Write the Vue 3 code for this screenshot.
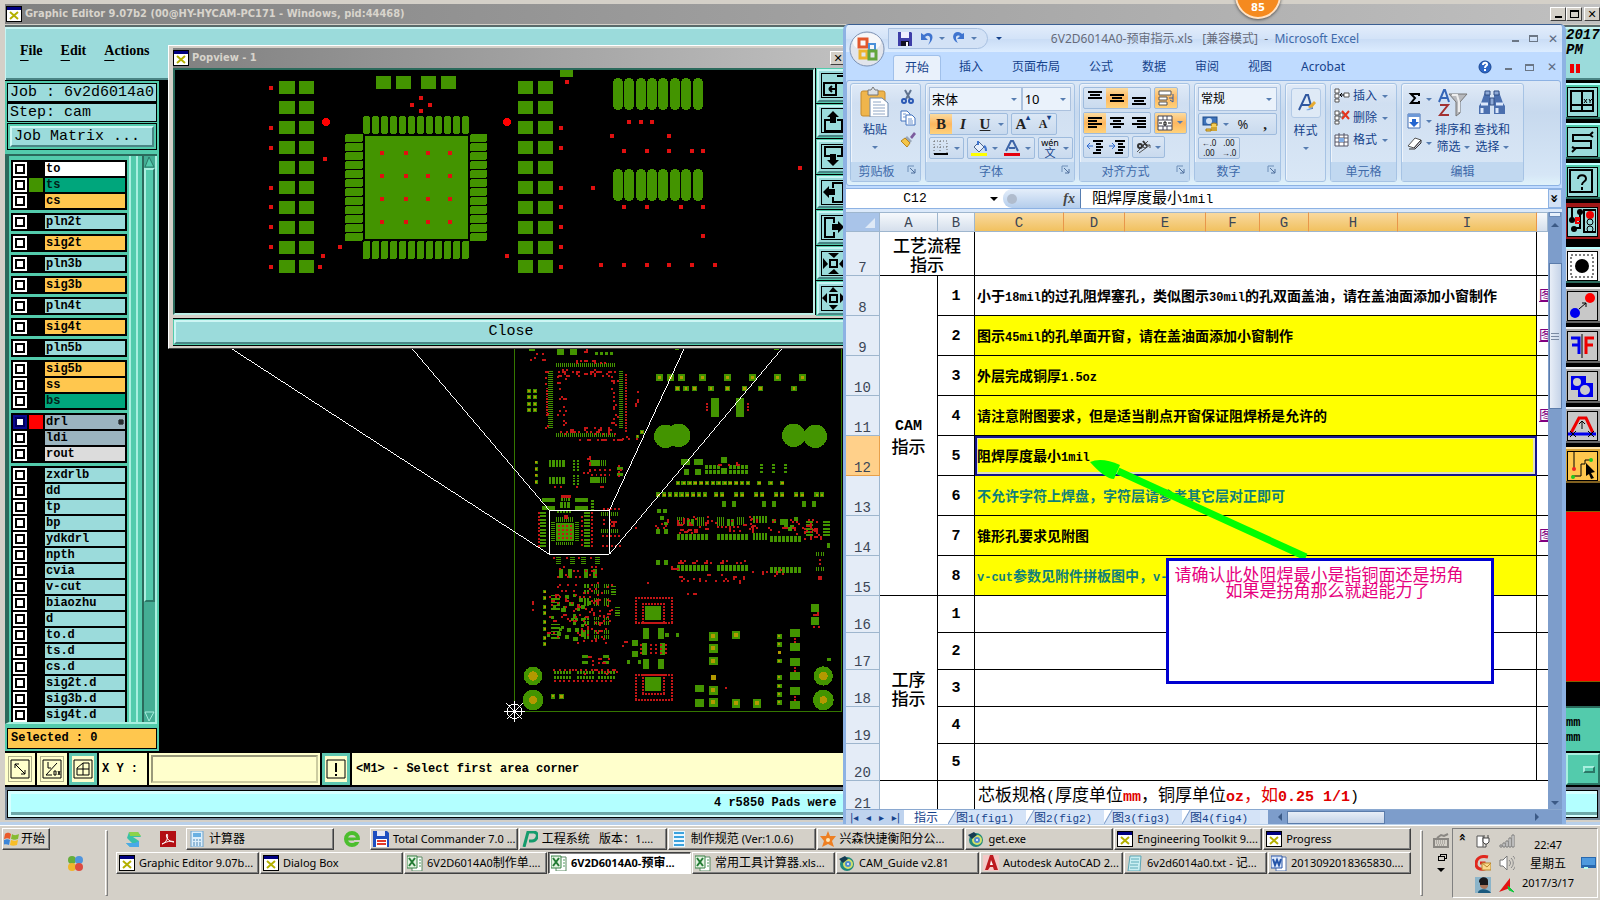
<script setup>
import { h } from 'vue'

const art = {
  xwin: '<rect width="16" height="16" fill="#fff" stroke="#000" stroke-width="2"/><rect x="1" y="1" width="14" height="3" fill="#000080"/><path d="M4 6l8 7M12 6l-8 7" stroke="#b4b000" stroke-width="2"/>',
  diag: '<path d="M1 1h18v18H1zM5 5l10 10M5 9V5h4M15 11v4h-4" fill="none" stroke="#000"/>',
  diagdx: '<path d="M1 1h18v18H1zM4 16L15 4M4 16h6M6 3v6h3M12 12h2v4h-2zM16 12l2 4M18 12l-2 4" fill="none" stroke="#000"/>',
  gridbox: '<path d="M1 1h18v18H1zM10 4h6v12H4V9zM4 10h12M10 4v12" fill="none" stroke="#000"/>',
  bang: '<path d="M1 1h18v18H1z" fill="none" stroke="#000"/><path d="M9 4h2v9H9zM9 15h2v2H9z"/>',
  zin: '<path d="M3 10h12v12H3zM16 3h7v7h-7M8 16h8M8 16l3-3M8 16l3 3" fill="none" stroke="#000" stroke-width="2"/>',
  up: '<path d="M9 12H4v11h17V12h-5" fill="none" stroke="#000" stroke-width="2"/><path d="M12 3l6 6h-3v6H9V9H6z"/>',
  down: '<path d="M9 12H4V3h17v9h-5" fill="none" stroke="#000" stroke-width="2"/><path d="M12 22l6-6h-3v-6H9v6H6z"/>',
  left: '<path d="M12 8V3h10v19H12v-5" fill="none" stroke="#000" stroke-width="2"/><path d="M2 12l6-6v3h6v6H8v3z"/>',
  right: '<path d="M13 8V3H4v19h9v-5" fill="none" stroke="#000" stroke-width="2"/><path d="M23 12l-6-6v3h-6v6h6v3z"/>',
  shrink: '<path d="M9 9h7v7H9z" fill="none" stroke="#000" stroke-width="2"/><path d="M7 2h11l-5 5zM7 23h11l-5-5zM2 7v11l5-5zM23 7v11l-5-5z"/>',
  grow: '<path d="M9 9h7v7H9z" fill="none" stroke="#000" stroke-width="2"/><path d="M12 1l5 5H8zM12 24l5-5H8zM1 12l5-5v10zM24 12l-5-5v10z"/>',
  save: '<path d="M1 1h13l1 1v13H1z" fill="#3e3ea8"/><path d="M4 1h8v6H4z" fill="#eef"/><path d="M4 10h8v5H4z" fill="#112"/><path d="M9 11h2v4H9z" fill="#fff"/>',
  undo: '<path d="M2 2v7h7L6 6c5-4 7 2 3 8 6-5 6-12 0-12-2 0-3 1-4 2z" fill="#3f74cf"/>',
  redo: '<path d="M13 2v6H6l3-3C4 3 4 8 7 12 0 9 1 1 7 1c2 0 3 1 4 2z" fill="#3f74cf"/>',
  paste: '<rect x="1" y="4" width="24" height="25" rx="2" fill="#efb54c" stroke="#c68b2c"/><path d="M8 3h3l2-3 2 3h3v5H8z" fill="#dde1e6" stroke="#777"/><path d="M10 11h12l6 5v14H10z" fill="#fff" stroke="#6d88ad"/><path d="M13 15h8M13 18h12M13 21h12M13 24h12M13 27h12" stroke="#8fa6c5"/>',
  cut: '<path d="M5 1l5 9M11 1l-5 9" stroke="#60738f" stroke-width="2"/><circle cx="4" cy="12" r="2" fill="none" stroke="#2b59b5" stroke-width="2"/><circle cx="11" cy="12" r="2" fill="none" stroke="#2b59b5" stroke-width="2"/>',
  copy: '<path d="M1 1h6l3 3v7H1z" fill="#fff" stroke="#4373bd"/><path d="M6 5h6l3 3v7H6z" fill="#fff" stroke="#4373bd"/><path d="M3 4h3M3 7h3M8 9h4M8 11h5M8 13h5" stroke="#6c94d0"/>',
  brush: '<path d="M10 6l4-5 2 2-4 5z" fill="#7c5c9e"/><path d="M7 5l5 5-2 2-5-5z" fill="#9aa7b8"/><path d="M5 7l5 5-3 4-6-6z" fill="#f5c547" stroke="#b58420"/>',
  border: '<path d="M1 1h13v13M1 1v13M7 1v13M1 7h13" fill="none" stroke="#666" stroke-dasharray="1 2"/><path d="M1 14h14" stroke="#000" stroke-width="2"/>',
  fill: '<path d="M3 7l5-5 5 5-5 5z" fill="#e6effb" stroke="#4a648c"/><path d="M7 5V1M13 6c2 1 2 4 2 5" stroke="#3f74cf" stroke-width="2" fill="none"/><path d="M0 13h16v3H0z" fill="#ff0"/>',
  fcolor: '<path d="M2 11L7 1h2l5 10M5 8h6" stroke="#3d65a8" stroke-width="2" fill="none"/><path d="M0 13h16v3H0z" fill="#e4000f"/>',
  top: '<path d="M1 2h14M3 5h10M1 8h14" stroke="#000" stroke-width="2"/>',
  mid: '<path d="M1 5h14M3 8h10M1 11h14" stroke="#000" stroke-width="2"/>',
  bot: '<path d="M1 8h14M3 11h10M1 14h14" stroke="#000" stroke-width="2"/>',
  al: '<path d="M1 3h14M1 6h9M1 9h14M1 12h9" stroke="#000" stroke-width="2"/>',
  ac: '<path d="M1 3h14M4 6h8M1 9h14M4 12h8" stroke="#000" stroke-width="2"/>',
  ar: '<path d="M1 3h14M6 6h9M1 9h14M6 12h9" stroke="#000" stroke-width="2"/>',
  out: '<path d="M6 2h10M9 5h5M9 8h7M9 11h5M6 14h8" stroke="#000" stroke-width="2"/><path d="M0 7h6M0 7l3-3M0 7l3 3" stroke="#2f6ad0" fill="none"/>',
  ind: '<path d="M6 2h10M9 5h5M9 8h7M9 11h5M6 14h8" stroke="#000" stroke-width="2"/><path d="M0 7h6M6 7L3 4M6 7l-3 3" stroke="#2f6ad0" fill="none"/>',
  wrap: '<path d="M1 1h12v4H1zM1 7h8v3H1zM1 12h8v3H1z" fill="#fff" stroke="#555"/><path d="M11 8h4V4M15 8v4l-3-2" fill="none" stroke="#3b5f99"/>',
  merge: '<path d="M1 1h14v14H1zM1 5h14M1 11h14M6 1v4M10 1v4M6 11v4M10 11v4" fill="#fff" stroke="#445"/><path d="M2 8h3M14 8h-3M7 7h2v3H7z" stroke="#000" fill="none"/>',
  orient: '<path d="M2 13L13 2M4 14L15 6M12 6h3v3" stroke="#555" fill="none"/><circle cx="5" cy="7" r="2" fill="none" stroke="#333" stroke-width="2"/><path d="M8 2l4 5" stroke="#333" stroke-width="2"/><circle cx="10" cy="7" r="2" fill="none" stroke="#333"/>',
  money: '<rect x="1" y="1" width="14" height="8" fill="#3e73ba" stroke="#1f4c8c"/><circle cx="7" cy="5" r="3" fill="#cfe0f4"/><ellipse cx="12" cy="9" rx="3" ry="2" fill="#f6cd57" stroke="#a97c12"/><path d="M9 10h6v5H9z" fill="#f6cd57"/><path d="M9 12h6M9 14h6M4 13h5v2H4z" stroke="#a97c12" fill="#f6cd57"/>',
  style: '<path d="M3 17L10 2h2l4 14M5 12h9" stroke="#2f579f" stroke-width="2" fill="none"/><path d="M12 14l6-6 2 2-5 6z" fill="#e8ab31"/><path d="M10 17c4 1 6-1 6-3" fill="#77a8e2"/>',
  ins: '<path d="M1 1h4v4H1zM1 6h4v4H1zM1 11h4v3H1zM10 5h5v4h-5z" fill="#fff" stroke="#555"/><path d="M6 7h4M6 7l2-2M6 7l2 2" stroke="#000" fill="none"/>',
  del: '<path d="M1 1h4v4H1zM1 6h4v4H1zM1 11h4v3H1zM6 3h3v4H6z" fill="#fff" stroke="#555"/><path d="M8 1l7 8M15 1L8 9" stroke="#e5331c" stroke-width="2"/>',
  fmt: '<path d="M1 3h13v11H1zM1 6h13M1 10h13M5 1v13M10 1v13" fill="#fff" stroke="#556"/><path d="M5 6h5v4H5z" fill="#7fabe4"/>',
  sum: '<path d="M12 5V3H4l4 4-4 5h8v-2" fill="none" stroke="#000" stroke-width="2"/>',
  filld: '<path d="M1 1h12v14H1z" fill="#fff" stroke="#456fb0"/><path d="M1 1h12v3H1z" fill="#6d98d7"/><path d="M5 6h4v3h3l-5 5-5-5h3z" fill="#2566cf"/>',
  erase: '<path d="M1 11l7-8 6 2-7 8z" fill="#fff" stroke="#555"/><path d="M7 13l7-8v3l-6 6H2" fill="#ccd" stroke="#333"/>',
  sort: '<path d="M11 5h18l-7 8v11l-4 3V13z" fill="#b7b9bd" stroke="#777"/><path d="M14 6h5l2 7v10" stroke="#eee" stroke-width="2" fill="none"/><path d="M1 13L6 1h1l4 12M3 9h6" stroke="#3566b8" stroke-width="2" fill="none"/><path d="M2 16h8L2 26h9" stroke="#a33131" stroke-width="2" fill="none"/>',
  find: '<path d="M3 14L7 3h5v22H1v-8zM16 3h5l4 11 2 3v8H16z" fill="#4b6fae"/><path d="M7 2h5v4H7zM16 2h5v4h-5zM12 9h4v7h-4z" fill="#8ea9d6" stroke="#314e84"/><path d="M3 15h7M18 15h7M4 19v5M19 19v5" stroke="#dce8fb" stroke-width="3"/>',
  launch: '<path d="M1 7V1h6" stroke="#6f8fb8" fill="none"/><path d="M3 3l5 5M8 4v4H4" stroke="#4f6f9c" fill="none"/>',
  s: '<path d="M4 1h9l3 5H8l6 4v6H5l-4-4h6L2 7z" fill="#38c1a8"/><path d="M4 1h9l3 4H5z" fill="#8bd34a"/><path d="M5 16l-4-4h9l4-2v6z" fill="#4aa9e8"/>',
  pdf: '<rect width="16" height="16" fill="#b30f14"/><path d="M2 13c4-1 7-7 5-10-2 2 1 8 7 8-3-2-8 0-12 2z" fill="none" stroke="#fff" stroke-width="1"/>',
  calc: '<rect x="2" y="0" width="12" height="16" fill="#dceefa" stroke="#6aa2cd"/><path d="M4 2h8v4H4z" fill="#69b0e2"/><path d="M4 9h8M4 12h8M4 14h8" stroke="#4b86b6" stroke-dasharray="2 1"/>',
  e: '<circle cx="8" cy="8" r="6" fill="none" stroke="#4cbe2e" stroke-width="4"/><path d="M4 8h8" stroke="#4cbe2e" stroke-width="3"/><path d="M10 10h6" stroke="#d4d0c8" stroke-width="2"/>',
  disk: '<path d="M0 0h14l2 2v14H0z" fill="#1d4ec1"/><path d="M4 0h8v5H4z" fill="#e4e7f5"/><path d="M3 8h11v8H3z" fill="#fff"/><path d="M4 10h9M4 13h9" stroke="#e13a2b" stroke-width="2"/>',
  p: '<path d="M2 16L6 1h6c6 1 3 9-2 9H7" fill="none" stroke="#159b6c" stroke-width="3"/>',
  doc: '<rect x="2" y="0" width="12" height="16" fill="#e9f7ff"/><path d="M3 2h10M3 6h10M3 10h10M3 14h10" stroke="#3ba2dd" stroke-width="2"/>',
  star: '<path d="M8 0l2 5 6 0-4 5 2 6-6-3-6 3 2-6-4-5h6z" fill="#ee7f22"/><circle cx="8" cy="9" r="2" fill="#ffe9b8"/>',
  gear: '<circle cx="8" cy="9" r="7" fill="#20887c"/><circle cx="9" cy="9" r="4" fill="#4f8cd0" stroke="#d2e06a" stroke-width="2"/><path d="M0 4l6-3 3 3-5 4z" fill="#153b52"/><circle cx="9" cy="9" r="1" fill="#fff"/>',
  xls: '<path d="M5 2h10v14H5z" fill="#fff" stroke="#5b8a62"/><path d="M0 1h10v12H0z" fill="#e3f3e1" stroke="#388246"/><path d="M2 3l6 8M8 3l-6 8" stroke="#237b34" stroke-width="2"/><path d="M12 5h2M12 8h2M12 11h2" stroke="#4f9a5f"/>',
  acad: '<rect width="16" height="16" fill="#f3c9c7"/><path d="M2 15L7 0h3l5 15h-4l-1-3H7l-2 3z" fill="#bd1a1f"/><path d="M8 5l2 5H7z" fill="#fff"/>',
  txt: '<path d="M3 1h11l-1 15H1z" fill="#c9eef2" stroke="#5ca6b4"/><path d="M4 4h8M4 7h8M3 10h8M3 13h8" stroke="#5caab8"/>',
  word: '<path d="M5 2h10v14H5z" fill="#fff" stroke="#5475ae"/><path d="M0 1h11v12H0z" fill="#dce8fb" stroke="#2b57a8"/><path d="M2 4l2 6 2-5 2 5 2-6" stroke="#2454a8" stroke-width="2" fill="none"/>',
  flag: '<path d="M1 3c3-2 4-1 6 0L6 8C4 7 3 7 0 8z" fill="#ea5a2a"/><path d="M8 3c3 2 4 1 7 0l-1 5c-3 1-4 1-7 0z" fill="#85bb31"/><path d="M0 9c3-1 4-1 6 0l-1 5c-2-1-4-1-6 0z" fill="#3d86d8"/><path d="M7 9c3 1 4 1 7 0l-1 5c-3 1-5 1-7 0z" fill="#f7bd26"/>',
  balls: '<circle cx="5" cy="5" r="4" fill="#65ae3c"/><circle cx="12" cy="5" r="4" fill="#4f94dd"/><circle cx="5" cy="12" r="4" fill="#f0b62c"/><circle cx="12" cy="12" r="4" fill="#dd4b41"/>',
  keyb: '<path d="M1 6h14v8H1zM4 5l4-3 3 1 4-2" fill="none" stroke="#8a8782" stroke-width="2"/><path d="M3 8h10M3 10h10M4 12h8" stroke="#8a8782" stroke-dasharray="1 1"/>',
  plug: '<path d="M2 3h6v11H2z" fill="#fff" stroke="#555"/><path d="M8 5h6v4l-2 2h-2l-2-2zM9 2v3M13 2v3M11 11v3H8" fill="#fff" stroke="#444"/>',
  bars: '<path d="M1 12h2v2H1zM4 10h2v4H4zM7 8h2v6H7zM10 5h2v9h-2zM13 2h2v12h-2z" fill="#fff" stroke="#777"/>',
  g: '<path d="M13 2C5 0 1 4 1 9c0 4 4 6 8 5V8H5" fill="none" stroke="#e0281e" stroke-width="3"/><path d="M7 8h9v7H7z" fill="#fbd98c" stroke="#b9872e"/><path d="M7 8l5 4 4-4" fill="none" stroke="#b9872e"/>',
  vol: '<path d="M1 5h3l4-4v14l-4-4H1z" fill="#fff" stroke="#777"/><path d="M10 5c2 2 2 4 0 6M12 3c3 3 3 7 0 10M14 1c4 4 4 10 0 14" fill="none" stroke="#888"/>',
  face: '<rect width="16" height="16" fill="#8bb4c9"/><path d="M3 16c0-5 10-5 13 0z" fill="#1b5a7e"/><path d="M5 4c0-4 8-4 8 0v5c-1 4-6 4-8 0z" fill="#a8745a"/><path d="M4 5c0-6 9-6 9-1v2H5zM5 6h8v2H5z" fill="#19191c"/>',
  tri: '<path d="M11 1v10L0 15z" fill="#e41414"/><path d="M9 9l6 6-5-2z" fill="#12c63c" stroke="#12c63c"/>',
  mon: '<path d="M0 2h15v11H0z" fill="#2868ae"/><path d="M1 3h13v7H1z" fill="#4f9ade"/><path d="M3 12h4v2H3z" fill="#bfe"/>',
  office: '<circle cx="18" cy="18" r="17" fill="#e2e5ec" stroke="#7b90b2"/><ellipse cx="18" cy="11" rx="14" ry="9" fill="#fff" opacity=".7"/><path d="M10 8h8v8h-8z" fill="none" stroke="#e2572c" stroke-width="3"/><path d="M20 13h6v6h-6z" fill="none" stroke="#4a90d9" stroke-width="2"/><path d="M11 20h7v7h-7z" fill="none" stroke="#eeb42c" stroke-width="3"/><path d="M20 20h7v8h-7z" fill="none" stroke="#62a53c" stroke-width="3"/>',
  help: '<circle cx="7" cy="7" r="6" fill="#2e67c6" stroke="#1b4894"/><path d="M5 5c0-3 5-3 4 0-1 1-2 1-2 3M7 9v2" stroke="#fff" stroke-width="2" fill="none"/>',
  t1: '<path d="M3 3h22v20H3zM14 3v20M3 17h22" fill="none" stroke="#000" stroke-width="2"/><path d="M16 11l3 4M19 11l-3 4M21 11l1 2 2-2M22 13v2" stroke="#000" fill="none"/>',
  t2: '<path d="M25 4l-3 3H5v6h18v7H8l-4 4M4 19l4 2M25 9l-3-2" fill="none" stroke="#000" stroke-width="2"/>',
  t3: '<path d="M2 2h22v22H2z" fill="none" stroke="#000" stroke-width="2"/><path d="M10 11c0-5 8-5 8 0 0 3-4 2-4 6M14 19v3" fill="none" stroke="#000" stroke-width="2"/>',
  t4: '<path d="M4 0v11M12 4v16H7M16 2h12v22H16z" fill="none" stroke="#000" stroke-width="2"/><circle cx="12" cy="4" r="3"/><circle cx="4" cy="12" r="3"/><circle cx="6" cy="21" r="3"/><circle cx="22" cy="7" r="4" fill="#e00"/><circle cx="22" cy="14" r="3" fill="none" stroke="#000"/><circle cx="22" cy="21" r="3" fill="none" stroke="#000"/><path d="M12 10H8v5h4M8 12h4" stroke="#e00" stroke-width="2" fill="none"/>',
  t5: '<path d="M3 3h22v22H3z" fill="none" stroke="#000" stroke-dasharray="2 2"/><circle cx="14" cy="14" r="7"/>',
  t6: '<circle cx="7" cy="21" r="5" fill="#00e"/><circle cx="22" cy="6" r="5" fill="#f00"/><path d="M11 17l7-6M14 11h4v4" stroke="#000" fill="none"/>',
  t7: '<path d="M14 2v24" stroke="#000"/><path d="M3 6h8v16M4 13h7" stroke="#00e" stroke-width="3" fill="none"/><path d="M26 6h-8v16M25 13h-7" stroke="#e00" stroke-width="3" fill="none"/>',
  t8: '<path d="M3 4h15v7h7v14H10v-7H3z" fill="#00e"/><circle cx="9" cy="10" r="4" fill="#ccc"/><circle cx="17" cy="18" r="5" fill="#ccc"/>',
  t9: '<path d="M3 21l8-15h7l7 15" stroke="#e00" stroke-width="3" fill="none"/><path d="M0 22h28" stroke="#00e" stroke-width="3"/><path d="M14 9v8M11 12l3-3 3 3M2 19l6 6M8 19l-6 6M20 19l6 6M26 19l-6 6" stroke="#000" fill="none"/>',
  t10: '<path d="M6 0v16M4 24h9l0-12h4V8h6" stroke="#000" fill="none"/><circle cx="6" cy="17" r="2" fill="#e22"/><circle cx="5" cy="25" r="2" fill="#2c2"/><circle cx="23" cy="8" r="2" fill="#2c2"/><path d="M18 11l9 9-4 1 3 5-3 1-2-5-3 2z"/>'
}
const Icon = (p) => h('svg', { width: p.w || 16, height: p.h || p.w || 16, viewBox: `0 0 ${p.w || 16} ${p.h || p.w || 16}`, 'aria-hidden': 'true', innerHTML: art[p.n] })
Icon.props = ['n', 'w', 'h']

const layers = [
  [['to', 'w'], ['ts', 'g', '#439400'], ['cs', 'o']],
  [['pln2t', 'b']], [['sig2t', 'o']], [['pln3b', 'b']], [['sig3b', 'o']],
  [['pln4t', 'b']], [['sig4t', 'o']], [['pln5b', 'b']],
  [['sig5b', 'o'], ['ss', 'o'], ['bs', 'g']],
  [['drl', 's', '#ff0000'], ['ldi', 's'], ['rout', 'l']],
  ['zxdrlb', 'dd', 'tp', 'bp', 'ydkdrl', 'npth', 'cvia', 'v-cut', 'biaozhu', 'd', 'to.d', 'ts.d', 'cs.d', 'sig2t.d', 'sig3b.d', 'sig4t.d'].map((n) => [n, 'b'])
]

const box = (x, y, w, hh) => `M${x} ${y}h${w}v${hh}h${-w}z`
const run = (x, y, n, dx, w, hh) => Array.from({ length: n }, (_, i) => box(x + i * dx, y, w, hh)).join('')
const stack = (x, y, n, dy, w, hh) => Array.from({ length: n }, (_, i) => box(x, y + i * dy, w, hh)).join('')
const dots = (pts, s) => pts.map(([x, y]) => box(x - s / 2, y - s / 2, s, s)).join('')
let seed = 7
const rnd = () => (seed = (seed * 16807) % 2147483647) / 2147483647
const scatter = (x, y, w, hh, n, a = 6, b = 6) =>
  Array.from({ length: n }, () => box(x + Math.round((rnd() * w) / 6) * 6, y + Math.round((rnd() * hh) / 6) * 6, a, b)).join('')
const ring = (x, y, w, hh, d = 9) => {
  let s = ''
  for (let i = 0; i <= w; i += d) s += box(x + i, y, 6, 6) + box(x + i, y + hh, 6, 6)
  for (let i = 0; i <= hh; i += d) s += box(x, y + i, 6, 6) + box(x + w, y + i, 6, 6)
  return s
}

const viaPts = [
  ...[779, 812, 844, 907, 983, 1057, 1132, 1207].map((x) => [x, 116, 20]),
  ...[833, 858, 883, 933, 983, 1033, 1082, 1182].map((x) => [x, 148, 16]),
  ...[156, 174, 195, 214].flatMap((y) => [[387, y, 12], [406, y, 12]]),
  ...[370, 390, 409, 429].map((y) => [409, y, 10]),
  ...[834, 851, 869, 886, 904, 921, 939, 956, 974, 991, 1009, 1026, 1044, 1078, 1112, 1147].map((x) => [x, 432, 13]),
  ...[775, 793, 810, 828, 845, 862, 880, 897, 915, 949, 967, 1009, 1027, 1069, 1087, 1129, 1147, 1189, 1207, 1250, 1266].map((x) => [x, 467, 13]),
  ...[758, 777, 804, 823, 850, 870, 897, 916].map((y) => [434, y, 11]),
  [459, 1072, 14], [484, 1072, 15],
  ...[892, 928, 966, 1054, 1090].map((y) => [940, y, 26]),
  [1008, 889, 24], [1008, 1093, 26], [1071, 1093, 26],
  ...[892, 916, 966, 1015, 1041, 1066, 1090].map((y) => [1138, y, 14]),
  [713, 292, 10], [726, 279, 12]
]
const green = [
  run(469, 72, 30, 6, 3, 12), run(469, 282, 30, 6, 3, 12), stack(444, 96, 29, 6, 15, 3), stack(657, 96, 29, 6, 12, 3),
  box(471, 30, 21, 18), box(510, 30, 21, 18), run(585, 39, 4, 15, 8, 9), box(387, 30, 18, 5), box(825, 30, 12, 4), box(1122, 30, 14, 4),
  box(933, 177, 24, 57), box(1008, 177, 24, 57),
  run(447, 362, 5, 10, 7, 22), run(447, 413, 5, 10, 7, 22), stack(520, 362, 4, 9, 5, 6), stack(531, 362, 4, 9, 5, 6), stack(520, 408, 4, 8, 5, 5), stack(531, 408, 4, 8, 5, 5),
  box(570, 362, 30, 19), box(570, 413, 30, 19), run(603, 362, 3, 6, 3, 19), run(603, 413, 3, 6, 3, 19), box(651, 384, 18, 8), box(651, 402, 18, 8),
  box(426, 477, 39, 12), box(426, 501, 39, 12), box(525, 477, 39, 12), box(525, 501, 39, 12), run(480, 488, 3, 11, 8, 20), run(484, 472, 4, 7, 4, 14), stack(573, 483, 4, 9, 9, 6),
  stack(420, 519, 11, 10, 8, 6), stack(430, 519, 11, 10, 8, 6), stack(552, 519, 11, 10, 8, 6), stack(562, 519, 11, 10, 8, 6),
  box(468, 552, 55, 54), run(468, 535, 9, 6, 4, 13), run(468, 609, 9, 6, 4, 8), stack(453, 549, 10, 6, 11, 3), stack(526, 549, 10, 6, 11, 3),
  run(603, 519, 9, 6, 3, 12), run(603, 570, 9, 6, 3, 12), run(472, 516, 5, 9, 6, 6),
  ...[468, 510, 543, 585].map((x) => stack(x, 654, 4, 6, 15, 4)),
  run(477, 690, 2, 28, 12, 27), run(551, 690, 2, 28, 12, 27),
  ...[735, 753, 777, 790, 833, 846, 874, 888].map((y) => run(552, y, 2, 9, 5, 11) + run(582, y, 3, 6, 3, 11) + run(612, y, 3, 6, 3, 11)),
  stack(453, 768, 5, 10, 28, 4), stack(453, 855, 5, 10, 28, 4),
  ...[[495, 768], [508, 790], [537, 777], [543, 798], [560, 786], [484, 806], [501, 866], [525, 868], [495, 888], [520, 893], [544, 880], [471, 880]].map(([x, y]) => box(x, y, 13, 12)),
  stack(633, 741, 4, 8, 14, 4), stack(645, 804, 4, 8, 14, 4), scatter(440, 760, 110, 140, 20, 9, 9),
  run(547, 948, 2, 9, 8, 8), run(547, 966, 2, 9, 8, 8), run(610, 948, 2, 9, 8, 8), run(610, 966, 2, 9, 8, 8),
  run(462, 996, 6, 9, 6, 8), run(462, 1011, 6, 9, 6, 9), run(531, 996, 6, 9, 6, 8), run(531, 1011, 6, 9, 6, 9), run(594, 996, 6, 9, 6, 8), run(594, 1011, 6, 9, 6, 9),
  box(735, 801, 48, 42), box(735, 1014, 48, 42),
  run(729, 867, 2, 45, 18, 33), box(727, 912, 14, 36), box(780, 912, 15, 36), run(729, 960, 2, 45, 18, 30), box(696, 903, 18, 18), box(696, 936, 18, 18),
  box(795, 882, 12, 11), box(828, 882, 9, 11), box(681, 963, 9, 11), box(714, 963, 9, 11),
  ...[870, 912, 957, 1000, 1044, 1086].map((y) => box(1170, y, 30, 23)), box(885, 1038, 27, 21), box(885, 1080, 27, 23), box(1281, 957, 12, 8),
  box(844, 360, 26, 17), box(882, 360, 27, 17), box(852, 391, 15, 17), box(885, 391, 18, 17), box(963, 355, 18, 16), box(963, 387, 18, 17),
  run(915, 378, 4, 12, 9, 12), run(915, 393, 4, 12, 9, 11), run(987, 378, 5, 12, 9, 12), run(987, 393, 5, 12, 9, 11),
  ...[1080, 1116, 1153].map((x) => stack(x, 375, 3, 10, 8, 6)),
  ...[966, 996, 1086, 1116, 1206, 1236].map((x) => box(x, 486, 12, 17)),
  run(831, 585, 8, 12, 9, 18), run(951, 585, 8, 12, 9, 18), run(1059, 582, 5, 9, 6, 20), run(1110, 591, 8, 12, 9, 18), run(1059, 531, 5, 9, 6, 21),
  run(831, 678, 8, 12, 9, 18), run(951, 678, 8, 12, 9, 18), run(1110, 685, 8, 12, 9, 18),
  run(831, 534, 4, 6, 4, 13), run(831, 549, 4, 6, 4, 10), run(861, 540, 2, 12, 8, 20), run(890, 534, 4, 6, 4, 26), run(951, 534, 4, 6, 4, 26), run(981, 540, 2, 12, 8, 20), run(1010, 534, 4, 6, 4, 24),
  scatter(1110, 534, 80, 30, 9, 11, 11), stack(1218, 546, 5, 10, 20, 6), stack(1269, 546, 5, 10, 20, 6),
  box(768, 570, 12, 16), box(793, 570, 10, 16), box(768, 663, 12, 16), box(793, 663, 10, 16), box(772, 511, 12, 10), box(790, 511, 10, 10), box(781, 532, 12, 10), box(793, 548, 12, 9),
  run(1248, 639, 4, 7, 3, 12), run(1248, 685, 4, 7, 3, 12), box(1281, 612, 9, 16), box(1233, 795, 24, 24), box(1233, 834, 24, 24),
  viaPts.map(([x, y, s]) => box(x - s / 2, y - s / 2, s, s)).join('')
].join('')
const gold = viaPts.map(([x, y, s]) => box(x - Math.round(s / 4), y - Math.round(s / 4), Math.round(s / 2), Math.round(s / 2))).join('') + box(932, 1008, 16, 15) + box(1133, 936, 10, 10)
const red = [
  scatter(474, 90, 168, 18, 36), scatter(474, 263, 168, 18, 32), scatter(470, 110, 26, 150, 18), scatter(632, 110, 16, 150, 18), stack(438, 146, 11, 8, 5, 5), stack(676, 105, 22, 8, 5, 5),
  scatter(480, 62, 140, 4, 10), scatter(500, 300, 170, 2, 14), scatter(435, 90, 6, 190, 8), scatter(700, 150, 12, 60, 5), scatter(390, 36, 60, 36, 6), scatter(540, 30, 20, 12, 4),
  stack(918, 191, 3, 10, 6, 6), stack(1041, 191, 3, 10, 6, 6),
  scatter(548, 346, 20, 60, 8), run(568, 390, 5, 15, 5, 5), run(574, 405, 5, 13, 5, 5), scatter(450, 440, 160, 2, 6), scatter(655, 378, 10, 50, 4),
  run(484, 468, 5, 6, 5, 8), stack(414, 519, 10, 11, 5, 6), stack(574, 519, 10, 11, 5, 6), stack(543, 530, 7, 14, 5, 6), box(493, 529, 12, 10),
  ...[558, 570, 582, 594].map((y) => run(474, y, 4, 12, 7, 7)),
  run(609, 507, 5, 11, 6, 5), run(606, 618, 5, 13, 6, 5), scatter(603, 540, 50, 18, 12), run(606, 588, 5, 12, 5, 5),
  run(460, 654, 4, 37, 6, 6), scatter(470, 682, 130, 34, 18), scatter(440, 730, 190, 180, 110), scatter(560, 780, 70, 60, 14), scatter(395, 780, 20, 60, 3),
  scatter(545, 945, 90, 30, 10), run(460, 990, 12, 16, 6, 5), run(462, 1022, 13, 14, 6, 6), scatter(515, 985, 140, 20, 10),
  ring(705, 774, 108, 75), ring(726, 792, 63, 57), ring(705, 1005, 108, 75), ring(726, 1005, 63, 57),
  ...[915, 927, 939].map((y) => run(750, y, 3, 15, 6, 6) + run(720, y, 2, 75, 5, 5)),
  stack(1182, 897, 2, 9, 6, 6), stack(1182, 984, 2, 9, 6, 6), stack(1182, 1071, 2, 9, 6, 6),
  scatter(955, 370, 60, 6, 6), scatter(830, 530, 230, 48, 50), scatter(1050, 540, 200, 42, 38), scatter(835, 570, 60, 8, 12), scatter(765, 540, 40, 30, 7), scatter(1205, 560, 60, 40, 20),
  scatter(835, 662, 210, 8, 20), scatter(800, 680, 30, 6, 5), scatter(830, 706, 200, 22, 26), scatter(1050, 690, 100, 18, 10), scatter(730, 716, 40, 18, 2), box(1254, 712, 11, 11),
  scatter(855, 755, 60, 10, 4), stack(1257, 660, 2, 12, 6, 6), scatter(1232, 820, 32, 8, 8), run(1240, 861, 2, 14, 6, 6), scatter(660, 290, 50, 14, 4), scatter(666, 900, 10, 18, 3), box(974, 1044, 7, 7), box(705, 564, 7, 6)
].join('')

const pvY = [83, 103, 123, 143, 163, 183, 203, 223, 243, 262]
const pvGreen = [279, 299, 518, 538].flatMap((x) => pvY.map((y) => box(x, y, x === 279 ? 16 : 15, 13))).join('') +
  [376, 396, 421, 441].map((x) => box(x, 78, 15, 13)).join('') + box(560, 72, 13, 7) + box(365, 138, 103, 103)
const pvRed = dots([
  ...[90, 130, 150, 190, 209, 229, 249, 269].map((y) => [271, y]), ...[130, 150, 190, 209, 229, 249, 269].map((y) => [561, y]),
  [567, 84], [325, 161], [340, 249], [323, 258], [320, 269], [507, 258], [421, 100], [412, 107], [430, 107], [421, 113],
  ...[155, 178, 201, 224].flatMap((y) => [382, 406, 428, 450].map((x) => [x, y])),
  [629, 124], [641, 124], [652, 124], [612, 138], [669, 138], [624, 153], [647, 153], [669, 153], [692, 153], [703, 153],
  [800, 170], [593, 190], [624, 209], [647, 209], [681, 209], [703, 209], [703, 238],
  ...[601, 624, 647, 669, 692, 715].map((x) => [x, 267])
], 4)
const twelve = Array.from({ length: 12 }, (_, i) => i)
const eight = [613, 624, 636, 647, 658, 670, 681, 693]

const tools = [['t1', 'c'], ['t2', 'c'], ['t3', 'c'], ['t4', 'r'], ['t5', 'w'], ['t6', 'y'], ['t7', 'y'], ['t8', 'y'], ['t9', 'y'], ['t10', 'o']]
const cols = [['A', 58], ['B', 37], ['C', 89], ['D', 61], ['E', 81], ['F', 54], ['G', 49], ['H', 89], ['I', 139]]
const split = (t) => t.split(/([\x21-\x7e]+(?: [\x21-\x7e]+)*)/).filter(Boolean).map((s) => ({ s, lat: /^[\x21-\x7e]/.test(s) }))
const cam = [
  ['小于18mil的过孔阻焊塞孔，类似图示30mil的孔双面盖油，请在盖油面添加小窗制作', '', 1],
  ['图示45mil的孔单面开窗，请在盖油面添加小窗制作', 'y', 1],
  ['外层完成铜厚1.5oz', 'y', 0],
  ['请注意附图要求，但是适当削点开窗保证阻焊桥是允许的', 'y', 1],
  ['阻焊厚度最小1mil', 'y sel', 0],
  ['不允许字符上焊盘，字符层请参考其它层对正即可', 'y teal', 0],
  ['锥形孔要求见附图', 'y', 1],
  ['v-cut参数见附件拼板图中，v-cut', 'y teal', 0]
]
const tabs = ['插入', '页面布局', '公式', '数据', '审阅', '视图', 'Acrobat']
const row1 = [['disk', 'Total Commander 7.0 ...'], ['p', '工程系统   版本：1....'], ['doc', '制作规范 (Ver:1.0.6)'], ['star', '兴森快捷衡阳分公...'], ['gear', 'get.exe'], ['xwin', 'Engineering Toolkit 9....'], ['xwin', 'Progress']]
const row2 = [['xwin', 'Graphic Editor 9.07b...'], ['xwin', 'Dialog Box'], ['xls', '6V2D6014A0制作单....'], ['xls', '6V2D6014A0-预审...', 1], ['xls', '常用工具计算器.xls...'], ['gear', 'CAM_Guide v2.81'], ['acad', 'Autodesk AutoCAD 2...'], ['txt', '6v2d6014a0.txt - 记...'], ['word', '2013092018365830....']]
</script>

<template>
  <div class="screen">
    <main class="desk">
      <section class="editor">
        <header class="title">
          <Icon n="xwin" /><h1>Graphic Editor 9.07b2 (00@HY-HYCAM-PC171 - Windows, pid:44468)</h1>
          <button class="wb" aria-label="Minimize"><i class="min"></i></button><button class="wb" aria-label="Maximize"><i class="max"></i></button><button class="wb last" aria-label="Close window">✕</button>
        </header>
        <div class="menurow">
          <nav class="menus"><button><u>F</u>ile</button><button><u>E</u>dit</button><button><u>A</u>ctions</button></nav>
          <div class="clock">2017<br>PM<div class="pause"><i></i><i></i></div></div>
        </div>
        <div class="work">
          <aside class="side">
            <div class="info">Job : 6v2d6014a0</div>
            <div class="info second">Step: cam</div>
            <div class="matrix"><button>Job Matrix ...</button></div>
            <div class="listwrap">
              <div class="list">
                <div v-for="(g, gi) in layers" :key="gi" class="grp">
                  <label v-for="r in g" :key="r[0]" class="lay">
                    <input type="checkbox" :class="{ on: r[0] === 'drl' }"><span class="sw" :style="{ background: r[2] || '#000' }"></span><span class="nm" :class="r[1]">{{ r[0] }}<svg v-if="r[0] === 'drl'" width="6" height="14"><path d="M1 5h4v4H1zM3 5v4M1 7h4" fill="none" stroke="#000" /></svg></span>
                  </label>
                </div>
              </div>
              <div class="rail"></div>
              <div class="sbar">
                <button aria-label="Scroll up"><svg width="11" height="12"><path d="M5 1l5 10H1z" fill="#53cbac" stroke="#2b7867" /></svg></button>
                <div class="thumb"></div><div class="rest"></div>
                <button aria-label="Scroll down"><svg width="11" height="11"><path d="M1 1h9l-5 9z" fill="#44ad94" stroke="#a8efdf" /></svg></button>
              </div>
            </div>
            <div class="selected">Selected : 0</div>
          </aside>
          <svg class="board" width="1407" height="672" role="img" aria-label="Board layout">
            <g transform="translate(241 258) scale(.33333)" shape-rendering="crispEdges">
              <path d="M343 0V1117H1325V0" fill="none" stroke="#347700" stroke-width="3" />
              <path :d="green" fill="#439400" />
              <g fill="#439400"><circle cx="797" cy="292" r="35" /><circle cx="836" cy="289" r="35" /><circle cx="1181" cy="289" r="35" /><circle cx="1246" cy="292" r="35" /><circle cx="399" cy="1011" r="28" /><circle cx="399" cy="1083" r="31" /><circle cx="1270" cy="1011" r="29" /><circle cx="1270" cy="1083" r="31" /></g>
              <path :d="red" fill="#c41616" />
              <g fill="#b39900"><path :d="gold" /><circle cx="399" cy="1011" r="14" /><circle cx="399" cy="1083" r="12" /><circle cx="1270" cy="1011" r="13" /><circle cx="1270" cy="1083" r="11" /></g>
              <path d="M37 30L448 514M-504 30L448 646M852 30L628 514M1145 30L628 646M448 514H628V646H448z" fill="none" stroke="#fff" stroke-width="3" />
              <path d="M312 1117h62M343 1086v62M319 1093l48 48M367 1093l-48 48M343 1095a22 22 0 1 0 1 0" fill="none" stroke="#fff" stroke-width="3" />
            </g>
          </svg>
          <aside class="tools">
            <button v-for="t in tools" :key="t[0]" :class="t[1]" :aria-label="'Tool ' + t[0]"><span><Icon :n="t[0]" w="28" /></span></button>
            <div class="swatch"></div>
            <div class="units">mm<br>mm</div>
          </aside>
        </div>
        <div class="cmd">
          <button class="cb" aria-label="Diagonal"><Icon n="diag" w="20" /></button><button class="cb" aria-label="Angle"><Icon n="diagdx" w="20" /></button><button class="cb teal" aria-label="Grid"><Icon n="gridbox" w="20" /></button>
          <label for="xy">X Y :</label><div class="xyw"><input id="xy" type="text"></div>
          <button class="cb teal" aria-label="Alert"><Icon n="bang" w="20" /></button>
          <output>&lt;M1&gt; - Select first area corner</output>
          <button class="flat" aria-label="Units"><i></i></button>
        </div>
        <div class="status"><div>4 r5850 Pads were selected</div></div>
      </section>

      <section class="pop">
        <header class="title"><Icon n="xwin" /><h2>Popview - 1</h2><button class="wb" aria-label="Close popview">✕</button></header>
        <div class="popmain">
          <div class="pv">
            <svg width="639" height="243" viewBox="175 72 639 243" shape-rendering="crispEdges" role="img" aria-label="Magnified pads">
              <g fill="#439400"><path :d="pvGreen" />
                <template v-for="i in twelve" :key="i"><rect :x="363 + 9 * i" y="118" width="7" height="18" rx="3" /><rect :x="363 + 9 * i" y="243" width="7" height="18" rx="2" /><rect x="345" :y="136 + 9 * i" width="18" height="8" rx="2" /><rect x="470" :y="136 + 9 * i" width="17" height="8" rx="2" /></template>
                <template v-for="x in eight" :key="x"><rect :x="x" y="80" width="10" height="32" rx="5" /><rect :x="x" y="171" width="10" height="32" rx="5" /></template>
              </g>
              <path :d="pvRed" fill="#e01010" /><circle cx="326" cy="124" r="4" fill="#f00" /><circle cx="507" cy="124" r="4" fill="#f00" />
            </svg>
          </div>
          <div class="pvtools"><button v-for="n in ['zin', 'up', 'down', 'left', 'right', 'shrink', 'grow']" :key="n" :aria-label="n"><Icon :n="n" w="25" /></button></div>
        </div>
        <div class="popclose"><button>Close</button></div>
      </section>

      <section class="excel">
        <button class="orb" aria-label="Office"><Icon n="office" w="36" /></button>
        <header class="xt">
          <div class="qat"><button aria-label="Save"><Icon n="save" /></button><button aria-label="Undo"><Icon n="undo" /></button><i class="dd"></i><button aria-label="Redo"><Icon n="redo" /></button><i class="dd"></i></div><i class="dd dark"></i>
          <h2>6V2D6014A0-预审指示.xls&nbsp;&nbsp; [兼容模式] &nbsp;- &nbsp;<b>Microsoft Excel</b></h2>
          <div class="xw"><i class="min"></i><i class="max"></i><span>✕</span></div>
        </header>
        <nav class="xtabs"><a href="#" class="cur">开始</a><a v-for="t in tabs" :key="t" href="#">{{ t }}</a><div class="xw"><Icon n="help" w="14" /><i class="min"></i><i class="max"></i><span>✕</span></div></nav>
        <div class="ribbon">
          <div class="rg g1"><div class="rb row">
            <button class="big"><Icon n="paste" w="30" />粘贴<i class="dd"></i></button>
            <div class="colx"><button aria-label="Cut"><Icon n="cut" /></button><button aria-label="Copy"><Icon n="copy" /></button><button aria-label="Format painter"><Icon n="brush" /></button></div>
          </div><footer class="lp">剪贴板<Icon n="launch" w="9" /></footer></div>
          <div class="rg g2"><div class="rb">
            <div class="line"><div class="cmb wide"><select aria-label="字体"><option>宋体</option></select><i class="dd"></i></div><div class="cmb"><select aria-label="字号"><option>10</option></select><i class="dd"></i></div></div>
            <div class="line gap"><div class="seg"><button class="hot ser"><b>B</b></button><button class="ser"><em>I</em></button><button class="ser"><u>U</u></button><i class="dd"></i></div><div class="seg"><button class="ser">A<sup>▴</sup></button><button class="ser sm">A<sup>▾</sup></button></div></div>
            <div class="line gap"><div class="seg"><button aria-label="Border"><Icon n="border" /></button><i class="dd"></i></div><div class="seg"><button aria-label="Fill"><Icon n="fill" /></button><i class="dd"></i><button aria-label="Font colour"><Icon n="fcolor" /></button><i class="dd"></i></div><div class="seg"><button class="wen"><span>wén</span>文</button><i class="dd"></i></div></div>
          </div><footer class="lp">字体<Icon n="launch" w="9" /></footer></div>
          <div class="rg g3"><div class="rb">
            <div class="line gap"><div class="seg"><button aria-label="Top"><Icon n="top" /></button><button class="hot" aria-label="Middle"><Icon n="mid" /></button><button aria-label="Bottom"><Icon n="bot" /></button></div><div class="seg hot"><button aria-label="Wrap"><Icon n="wrap" /></button></div></div>
            <div class="line gap"><div class="seg"><button class="hot" aria-label="Left"><Icon n="al" /></button><button aria-label="Centre"><Icon n="ac" /></button><button aria-label="Right"><Icon n="ar" /></button></div><div class="seg hot"><button class="nar" aria-label="Merge"><Icon n="merge" /></button><i class="dd"></i></div></div>
            <div class="line gap"><div class="seg"><button aria-label="Outdent"><Icon n="out" /></button><button aria-label="Indent"><Icon n="ind" /></button></div><div class="seg"><button class="nar" aria-label="Orientation"><Icon n="orient" /></button><i class="dd"></i></div></div>
          </div><footer class="lp">对齐方式<Icon n="launch" w="9" /></footer></div>
          <div class="rg g4"><div class="rb">
            <div class="line"><div class="cmb wide"><select aria-label="数字格式"><option>常规</option></select><i class="dd"></i></div></div>
            <div class="line"><div class="seg fillw"><button aria-label="Currency"><Icon n="money" /></button><i class="dd"></i><button class="pct">%</button><button class="ser">,</button></div></div>
            <div class="line"><div class="seg"><button class="dec"><span>←.0</span><span>.00</span></button><button class="dec"><span>.00</span><span>→.0</span></button></div></div>
          </div><footer class="lp">数字<Icon n="launch" w="9" /></footer></div>
          <div class="rg g5"><button class="big"><span class="tile"><Icon n="style" w="20" /></span>样式<i class="dd"></i></button></div>
          <div class="rg g6"><div class="rb cells"><button><Icon n="ins" />插入<i class="dd"></i></button><button><Icon n="del" />删除<i class="dd"></i></button><button><Icon n="fmt" />格式<i class="dd"></i></button></div><footer>单元格</footer></div>
          <div class="rg g7"><div class="rb row"><div class="cells"><button aria-label="Sum"><Icon n="sum" /><i class="dd"></i></button><button aria-label="Fill down"><Icon n="filld" /><i class="dd"></i></button><button aria-label="Clear"><Icon n="erase" /><i class="dd"></i></button></div>
            <button class="big"><Icon n="sort" w="30" h="28" />排序和<span>筛选 <i class="dd"></i></span></button><button class="big"><Icon n="find" w="28" />查找和<span>选择 <i class="dd"></i></span></button></div><footer>编辑</footer></div>
        </div>
        <div class="fbar"><input class="name" aria-label="Name box" value="C12"><i class="dd blk"></i><button class="fx"><i></i><em>fx</em></button><div class="ftext"><span>阻焊厚度最小</span>1mil</div><button class="exp" aria-label="Expand">»</button></div>
        <div class="sheetrow">
          <div class="sheet">
            <table>
              <colgroup><col style="width:34px"><col v-for="c in cols" :key="c[0]" :style="{ width: c[1] + 'px' }"><col></colgroup>
              <thead><tr><th class="corner"><svg width="10" height="10"><path d="M10 0v10H0z" fill="#dfe9f6" /></svg></th><th v-for="(c, i) in cols" :key="c[0]" :class="{ act: i > 1 }">{{ c[0] }}</th><th></th></tr></thead>
              <tbody>
                <tr class="r7"><th>7</th><td colspan="2" class="cat">工艺流程<br>指示</td><td colspan="7"></td><td></td></tr>
                <tr v-for="(r, i) in cam" :key="i" class="r40" :class="{ act: i === 4 }"><th>{{ i + 8 }}</th><td v-if="!i" rowspan="8" class="cat"><div class="lat">CAM</div>指示</td><td class="num">{{ i + 1 }}</td>
                  <td colspan="7" class="txt" :class="r[1]"><div><span v-for="(p, k) in split(r[0])" :key="k" :class="{ lat: p.lat }">{{ p.s }}</span></div></td><td class="lnk"><a v-if="r[2]" href="#">图</a></td></tr>
                <tr v-for="n in 5" :key="'p' + n" class="r37"><th>{{ n + 15 }}</th><td v-if="n === 1" rowspan="5" class="cat">工序<br>指示</td><td class="num">{{ n }}</td><td colspan="7"></td><td></td></tr>
                <tr class="r21"><th>21</th><td></td><td></td><td colspan="8" class="spec">芯板规格<span class="lat">(</span>厚度单位<b class="lat">mm</b>，铜厚单位<b class="lat">oz</b><b>，如</b><b class="lat">0.25 1/1</b><span class="lat">)</span></td></tr>
              </tbody>
            </table>
            <svg class="arrow" width="240" height="110" aria-hidden="true"><path d="M220 102L32 16" stroke="#0f0" stroke-width="7" /><path d="M4 7q12-5 30 3l-6 14q-9 0-24-17z" fill="#0f0" /></svg>
            <div class="note">请确认此处阻焊最小是指铜面还是拐角&emsp;<br>如果是拐角那么就超能力了</div>
          </div>
          <div class="vs"><i class="split"></i><i class="tu"></i><div class="vt"><i></i><i></i><i></i></div><i class="td"></i></div>
        </div>
        <div class="stabs"><div class="navs"><button aria-label="First">|◂</button><button aria-label="Previous">◂</button><button aria-label="Next">▸</button><button aria-label="Last">▸|</button></div><a href="#" class="cur">指示</a><a v-for="n in 4" :key="n" href="#" class="st">图<span>{{ n }}(fig{{ n }})</span></a><div class="hs"><i class="hl"></i><div class="ht"></div><i class="hr"></i></div></div>
      </section>
      <div class="badge">85</div>
    </main>

    <footer class="task">
      <div class="start"><button class="tb"><Icon n="flag" />开始</button><Icon n="balls" /></div>
      <div class="sep"></div>
      <div class="rows">
        <div class="trow one"><button class="q" aria-label="Sogou"><Icon n="s" /></button><button class="q" aria-label="PDF"><Icon n="pdf" /></button><button class="tb"><Icon n="calc" />计算器</button><button class="q" aria-label="Browser"><Icon n="e" /></button><button v-for="t in row1" :key="t[1]" class="tb"><Icon :n="t[0]" /><span class="cap"><span v-for="(p, k) in split(t[1])" :key="k" :class="{ lat: p.lat }">{{ p.s }}</span></span></button></div>
        <div class="trow"><button v-for="t in row2" :key="t[1]" class="tb" :class="{ on: t[2] }"><Icon :n="t[0]" /><span class="cap"><span v-for="(p, k) in split(t[1])" :key="k" :class="{ lat: p.lat }">{{ p.s }}</span></span></button></div>
      </div>
      <div class="sep"></div>
      <div class="lang"><Icon n="keyb" /><i class="restore"></i><i class="dd blk"></i></div>
      <div class="tray"><div class="chev">»</div><div class="ti"><Icon n="plug" /><Icon n="bars" /><Icon n="g" /><Icon n="vol" /><Icon n="face" /><Icon n="tri" /></div><div class="time"><span>22:47</span><br>星期五<br><span>2017/3/17</span></div><Icon n="mon" /></div>
    </footer>
  </div>
</template>

<style>
body { overflow: hidden; background: #d4d0c8; }
</style>

<style scoped>
* { box-sizing: border-box; }
button, input, select { font: inherit; color: inherit; border: 0; padding: 0; margin: 0; background: none; border-radius: 0; }
svg { display: block; flex: none; }
h1, h2 { margin: 0; font-size: inherit; font-weight: inherit; }
a { color: inherit; text-decoration: none; }
.screen { height: 100vh; display: flex; flex-direction: column; font: 12px/16px "Noto Sans", "Noto Sans CJK SC", sans-serif; color: #000; overflow: hidden; }
.desk { flex: 1; position: relative; min-height: 0; background: #b9d0ea; }
.editor { height: calc(100% - 3px); display: flex; flex-direction: column; border: 1px solid #fff; border-width: 2px 0 3px 2px; border-color: #d4d0c8; background: #d4d0c8; padding: 2px 0 0 3px; font-family: "Liberation Mono", monospace; }
.title { display: flex; align-items: center; gap: 3px; height: 20px; flex: none; padding: 0 0 0 1px; background: linear-gradient(90deg, #808080, #c0c0c0); color: #d8d4cc; font: bold 11px/18px "DejaVu Sans Condensed", "Noto Sans", sans-serif; }
.title h1, .title h2 { flex: 1; white-space: nowrap; }
.wb { width: 16px; height: 14px; background: #d4d0c8; border: 1px solid; border-color: #fff #404040 #404040 #fff; color: #000; font: bold 11px/11px "DejaVu Sans", sans-serif; display: flex; align-items: center; justify-content: center; margin-left: -3px; }
.wb.last { margin-left: -1px; }
.wb .min, .wb .max { width: 7px; height: 8px; border: solid #000; border-width: 0 0 2px; }
.wb .max { width: 9px; border-width: 2px 1px 1px; }
.menurow { display: flex; height: 56px; flex: none; background: #9bdbdb; border-top: 2px solid #5a6a6a; border-bottom: 1px solid #000; margin-top: 1px; box-shadow: inset 1px 2px #c8f5f3, inset 0 -2px #4a8585; }
.menus { flex: 1; display: flex; gap: 18px; padding: 13px 15px; align-items: flex-start; font: bold 14px/22px "Liberation Serif", serif; }
.menus u { text-underline-offset: 5px; }
.clock { width: 34px; font: italic bold 14px/15px "Liberation Mono", monospace; padding-top: 1px; }
.pause { display: flex; gap: 2px; padding: 6px 4px; }
.pause i { width: 4px; height: 9px; background: #e00; }
.work { flex: 1; display: flex; min-height: 0; background: #000; overflow: hidden; }
.side { width: 154px; flex: none; background: #53cbac; display: flex; flex-direction: column; padding: 2px 2px 0; }
.info { height: 19px; background: #9bdbdb; border: 1px solid #000; padding-left: 2px; font-size: 15px; line-height: 17px; white-space: nowrap; }
.info.second { border-top-width: 2px; height: 20px; }
.matrix { height: 27px; border: 1px solid #000; margin: 1px 0 4px; padding: 2px; }
.matrix button { width: 100%; height: 100%; text-align: left; padding-left: 2px; font-size: 15px; line-height: 17px; background: #9bdbdb; border: 2px solid; border-color: #cdf6f4 #4a8585 #4a8585 #cdf6f4; }
.listwrap { display: flex; flex: 1; min-height: 0; border-top: 2px solid #2b6a5c; border-left: 4px solid #2b6a5c; border-bottom: 2px solid #a8efdf; margin-left: -2px; }
.list { width: 121px; padding: 4px 2px 0; display: flex; flex-direction: column; gap: 3px; overflow: hidden; }
.grp { flex: none; background: #000; padding: 2px 2px 0; }
.lay { display: flex; height: 16px; align-items: flex-start; }
.lay input { appearance: none; width: 14px; height: 14px; flex: none; background: #fff; border: 2px solid #fff; box-shadow: inset 0 0 0 2px #000; }
.lay input.on { border-color: #0a0a90; background: #fff; box-shadow: inset 0 0 0 2px #000060; }
.sw { width: 14px; height: 14px; margin: 0 2px; flex: none; }
.nm { flex: 1; height: 14px; font: bold 12px/14px "Liberation Mono", monospace; padding: 0 1px; display: flex; justify-content: space-between; }
.nm.w { background: #fff; } .nm.g { background: #00a67c; color: #032118; } .nm.o { background: #ffc74e; } .nm.b { background: #9bdbdb; } .nm.s { background: #9bb4bf; } .nm.l { background: #dcdcdc; }
.rail { width: 9px; border: solid #a8efdf; border-width: 0 2px; margin: 0 4px 0 0; background: #53cbac; }
.sbar { flex: 1; display: flex; flex-direction: column; align-items: stretch; border-left: 2px solid #2b6a5c; border-right: 2px solid #a8efdf; background: #44ad94; }
.sbar button { height: 12px; flex: none; }
.thumb { flex: 4; border: 2px solid; border-color: #a8efdf #2b7867 #2b7867 #a8efdf; background: #53cbac; }
.rest { flex: 1; }
.selected { height: 21px; margin: 4px 0 2px; flex: none; background: #ffc74e; border: 1px solid #000; padding-left: 3px; font: bold 12px/19px "Liberation Mono", monospace; }
.board { flex: 1; min-width: 0; width: 0; }
.tools { width: 34px; flex: none; display: flex; flex-direction: column; background: #000; overflow: hidden; }
.tools button { height: 36px; margin-bottom: 4px; flex: none; padding: 2px 1px; background: #53cbac; border-top: 2px solid #bff; border-bottom: 2px solid #2b6a5c; }
.tools button:first-child { margin-top: 2px; }
.tools span { display: block; width: 31px; height: 30px; border: 1px solid #000; background: #9bdbdb; }
.tools .r { background: #a01818; border-color: #a01818; margin-bottom: 8px; } .tools .w { background: #ddd; } .tools .w span { background: #fff; } .tools .y { background: #aaa; border-color: #eee #666 #666; } .tools .y span { background: #c8c8c8; } .tools .o { background: #d9a536; border-color: #ffe0a0 #806020 #806020; } .tools .o span { background: #ffc74e; }
.swatch { flex: 1; background: #f00; margin: 24px 0 24px; border: solid #806000; border-width: 1px 0; }
.units { height: 45px; flex: none; background: #53cbac; border-top: 2px solid #2b6a5c; font: bold 12px/15px "Liberation Mono", monospace; padding-top: 8px; }
.flat { width: 34px; background: #53cbac; margin-left: -2px; border: 2px solid; border-color: #a8efdf #2b7867 #2b7867 #a8efdf; display: flex; align-items: center; justify-content: flex-end; padding-right: 3px; }
.flat i { width: 12px; height: 7px; border: 2px solid; border-color: #a8efdf #2b7867 #2b7867 #a8efdf; }
.cmd { flex: none; height: 36px; display: flex; background: #000; padding: 2px 0; gap: 2px; font: bold 12px/32px "Liberation Mono", monospace; }
.cb { width: 30px; flex: none; background: #ffc; padding: 5px; box-shadow: inset 0 0 0 3px #ffc, inset 0 0 0 4px #b0b08a; }
.cb.teal { width: 28px; padding: 4px; box-shadow: inset 0 0 0 3px #5fc7b0; }
.cmd label { width: 48px; background: #ffc; padding-left: 3px; white-space: nowrap; }
.xyw { width: 171px; background: #ffc; padding: 2px; display: flex; }
.xyw input { flex: 1; min-width: 0; border: 2px solid; border-color: #99997a #cccca0 #cccca0 #99997a; }
.cmd output { flex: 1; background: #ffc; padding-left: 4px; }
.status { height: 33px; flex: none; background: #789; border-top: 3px solid #678; padding: 0 2px; margin-bottom: -1px; }
.status div { height: 28px; background: #b3ffff; border: 1px solid #000; box-shadow: inset 3px 3px #d6ffff, inset 0 -2px #d6ffff, inset 0 -5px #6fa8a8; font: bold 12px/25px "Liberation Mono", monospace; padding-left: 706px; }

.pop { position: absolute; left: 168px; top: 45px; width: 686px; height: 304px; background: #d4d0c8; border: 1px solid; border-color: #fff #404040 #404040 #fff; padding: 2px 3px 2px 4px; display: flex; flex-direction: column; }
.pop .title { height: 20px; padding: 0 4px 0 0; }
.popmain { flex: 1; display: flex; background: #53cbac; min-height: 0; }
.pv { border: 2px solid; border-color: #2b6a5c #bff0e8 #bff0e8 #2b6a5c; background: #000; flex: 1; min-width: 0; overflow: hidden; }
.pvtools { width: 35px; background: #000; padding: 1px 0 0 2px; display: flex; flex-direction: column; gap: 3px; }
.pvtools button { flex: 1; background: #9bdbdb; border: 2px solid; border-color: #c8f5f3 #4a8585 #4a8585 #c8f5f3; box-shadow: 0 0 0 1px #53cbac; display: flex; align-items: center; justify-content: center; }
.pvtools svg { outline: 1px solid #000; outline-offset: -1px; }
.popclose { height: 28px; flex: none; background: #53cbac; border: 1px solid #000; border-left: 0; padding: 1px; margin-top: 3px; }
.popclose button { width: 100%; height: 100%; background: #9bdbdb; border: 2px solid; border-color: #cdf6f4 #4a8585 #4a8585 #cdf6f4; font: 15px/20px "Liberation Mono", monospace; }

.excel { position: absolute; left: 843px; right: 34px; top: 24px; bottom: 1px; background: #bfdbff; border: solid #6f9bd3; border-width: 1px 4px 0 3px; border-color: #3b5f92 #8db2e3 #8db2e3; border-radius: 6px 6px 0 0; display: flex; flex-direction: column; overflow: hidden; color: #15428b; }
.orb { position: absolute; left: 3px; top: 6px; z-index: 2; }
.xt { height: 27px; flex: none; display: flex; align-items: center; background: linear-gradient(#e3edfb, #d3e3f8 50%, #c9dcf5 51%, #dcecff); }
.qat { margin-left: 42px; height: 21px; padding: 0 8px; display: flex; align-items: center; gap: 6px; border: 1px solid #a8c0e0; border-radius: 0 11px 11px 0; background: #d3e2f6; width: 100px; }
.qat .dd { margin-left: -2px; }
.dd { display: inline-block; width: 0; height: 0; flex: none; border: 3px solid transparent; border-top-color: #567db1; border-bottom: 0; vertical-align: middle; }
.dd.dark { margin-left: 8px; border-top-color: #15428b; }
.dd.blk { border-width: 4px; border-bottom: 0; border-top-color: #000; }
.xt h2 { flex: 1; text-align: center; color: #666b7a; white-space: nowrap; padding-right: 104px; }
.xt h2 b { font-weight: 400; color: #3e6aaa; }
.xw { display: flex; gap: 10px; align-items: center; color: #5d6b80; padding-right: 4px; }
.xw .min { width: 7px; height: 6px; border-bottom: 2px solid #6b7685; } .xw .max { width: 9px; height: 7px; border: 1px solid #6b7685; border-top-width: 2px; }
.xtabs { height: 28px; flex: none; display: flex; align-items: flex-end; padding-left: 47px; }
.xtabs a { height: 25px; line-height: 24px; padding: 0 11px; margin-right: 7px; }
.xtabs .cur { background: #e9f1fb; border: 1px solid #a0c0ea; border-bottom: 0; border-radius: 3px 3px 0 0; }
.xtabs .xw { margin-left: auto; height: 26px; gap: 13px; padding-right: 5px; }
.ribbon { height: 106px; flex: none; display: flex; gap: 4px; padding: 2px 3px 3px; background: linear-gradient(#dbe7f6, #c7d9ee 30%, #d6e6f6 90%, #dff2fb); border: 1px solid #8db2e3; border-radius: 3px; margin-right: 1px; }
.rg { flex: none; border: 1px solid #a6c3e4; border-radius: 3px; display: flex; flex-direction: column; background: linear-gradient(#e0eaf7, #d0dff1 20%, #d9e7f6); box-shadow: inset 1px 1px #eef4fb; }
.rg footer { height: 19px; flex: none; background: #c1d8f0; color: #3e6aaa; display: flex; align-items: center; justify-content: center; position: relative; }
.rg footer.lp { padding-right: 18px; }
.rg footer svg { position: absolute; right: 4px; top: 3px; }
.rb { flex: 1; padding: 3px; display: flex; flex-direction: column; gap: 2px; min-height: 0; }
.rb.row { flex-direction: row; }
.g1 { width: 71px; } .g2 { width: 150px; } .g3 { width: 111px; } .g4 { width: 87px; } .g5 { width: 41px; } .g6 { width: 67px; } .g7 { width: 123px; }
.g1 .big { width: 42px; }
.big { display: flex; flex-direction: column; align-items: center; gap: 5px; white-space: nowrap; }
.big .dd { margin-top: 3px; }
.colx { display: flex; flex-direction: column; gap: 5px; padding: 2px 0 0 2px; }
.line { display: flex; height: 24px; }
.line.gap { gap: 3px; }
.cmb { flex: 1; display: flex; align-items: center; background: #eaf2fb; border: 1px solid #abc1de; color: #000; padding-right: 4px; position: relative; }
.cmb.wide { flex: 2; }
.cmb select { flex: 1; appearance: none; height: 22px; padding: 0 2px; width: 0; font-size: 13px; }
.g4 .cmb select { font-size: 12px; }
.seg { display: flex; align-items: center; border: 1px solid #9ebbdd; border-radius: 2px; background: linear-gradient(#dbe7f5, #c9daee); height: 22px; padding-right: 0; }
.seg .dd { margin: 0 3px 0 2px; }
.seg button { width: 22px; height: 20px; display: flex; align-items: center; justify-content: center; }
.seg .nar { width: 20px; }
.hot { background: linear-gradient(#fbdb9f, #fdb75f 50%, #ffd27b) !important; }
.fillw { flex: 1; justify-content: space-between; }
.ser { font: bold 15px/18px "Liberation Serif", serif; color: #222; }
.ser sup { font-size: 8px; line-height: 8px; align-self: flex-start; color: #15428b; }
.ser.sm { font-size: 12px; }
.seg .wen { flex-direction: column; font-size: 11px; line-height: 11px; }
.wen span { font-size: 9px; line-height: 8px; color: #000; }
.pct { color: #222; font-size: 13px; }
.seg .dec { flex-direction: column; font: 8px/10px "Noto Sans", sans-serif; color: #111; width: 20px; }
.g5 .big { padding: 4px 5px; width: 100%; }
.tile { width: 30px; height: 30px; border: 1px solid #b3cae6; border-radius: 3px; background: #dfeaf6; display: flex; align-items: center; justify-content: center; }
.cells { display: flex; flex-direction: column; gap: 6px; padding-top: 4px; }
.cells button { display: flex; align-items: center; gap: 3px; height: 16px; white-space: nowrap; }
.cells .dd { margin-left: 2px; }
.g7 .rb { padding-left: 5px; gap: 3px; }
.g7 .cells .dd { margin-left: 0; }
.g7 .big { gap: 1px; padding-top: 2px; }
.g7 .big svg { margin-bottom: 4px; }
.g7 .big .dd { margin: 0; }
.fbar { height: 21px; flex: none; display: flex; align-items: center; margin-top: 2px; background: #fff; border: solid #8db2e3; border-width: 1px 0; color: #000; font: 13px/18px "Liberation Mono", monospace; }
.name { width: 144px; text-align: center; padding-right: 6px; }
.fx { width: 78px; height: 19px; margin-left: 5px; border-radius: 9px 0 0 9px; background: linear-gradient(#e4eefa, #b4cdec); display: flex; justify-content: space-between; align-items: center; padding: 0 5px 0 4px; border-right: 1px solid #567db1; font: bold 14px/16px "Liberation Serif", serif; color: #444; }
.fx i { width: 10px; height: 10px; border-radius: 5px; background: #b0bccd; }
.ftext { flex: 1; padding-left: 11px; display: flex; align-items: baseline; }
.ftext span { font: 15px/18px "Noto Sans CJK SC", sans-serif; }
.exp { width: 14px; height: 19px; background: #d3e2f6; border: 1px solid #8db2e3; font: bold 14px/12px "DejaVu Sans", sans-serif; writing-mode: vertical-rl; display: flex; justify-content: center; align-items: center; }
.sheetrow { flex: 1; display: flex; min-height: 0; border-top: 3px solid #dbe9fa; }
.sheet { flex: 1; position: relative; background: #fff; overflow: hidden; color: #000; }
table { width: 100%; table-layout: fixed; border-collapse: separate; border-spacing: 0; }
th { font: 14px/14px "Liberation Mono", monospace; font-weight: 400; color: #3b4656; background: #e4ecf7; border: solid #9eb6ce; border-width: 0 1px 1px 0; padding: 0; vertical-align: bottom; overflow: hidden; }
thead th { height: 20px; vertical-align: middle; padding-top: 2px; background: linear-gradient(#f6f9fc, #d5dfec); border-width: 1px 1px 1px 0; }
th.act { background: linear-gradient(#f9d99f, #f1c15f); border-right-color: #e8964a; }
tr.act th { background: #ffd08a; border-color: #e8a04a; }
.corner { background: #a9c4e9; } .corner svg { margin-left: 19px; }
td { border: solid #000; border-width: 0 1px 1px 0; padding: 0; overflow: hidden; white-space: nowrap; }
td:last-child { border-right: 0; }
.r7 > * { height: 44px; } .r40 > th, .r40 > .num, .r40 > .txt { height: 40px; } .r37 > th, .r37 > .num { height: 37px; } .r21 > * { height: 30px; border-bottom: 0; }
.cat { text-align: center; font: 500 17px/19px "Noto Sans CJK SC", sans-serif; }
.cat .lat { font: bold 15px/19px "Liberation Mono", monospace; }
.num { text-align: center; font: bold 15px/20px "Liberation Mono", monospace; padding-top: 2px; }
.txt { font: bold 14px/18px "Noto Sans CJK SC", sans-serif; }
.txt .lat { font: bold 12px/18px "Liberation Mono", monospace; }
.txt div { height: 20px; padding-left: 2px; overflow: hidden; }
.y { background: #ff0; } .teal { color: #0f7f7a; }
.sel { outline: 2px solid #14148c; outline-offset: -2px; box-shadow: inset 0 0 0 3px #dfdfc0; }
.lnk a { color: #800080; text-decoration: underline; font-size: 14px; padding-left: 2px; }
.spec { font: 17px/26px "Noto Sans CJK SC", sans-serif; padding-left: 3px; }
.spec b { font-weight: 400; color: #e00000; }
.spec .lat { font: 15px/26px "Liberation Mono", monospace; } .spec b.lat { font-weight: bold; }
.arrow { position: absolute; left: 240px; top: 243px; }
.note { position: absolute; left: 320px; top: 346px; width: 328px; height: 126px; border: 3px solid #0000d0; background: #fff; color: #e6007e; text-align: center; font: 17px/16px "Noto Sans CJK SC", sans-serif; padding: 5px 5px 0 0; white-space: nowrap; }
.vs { width: 14px; flex: none; background: #7d9dcb; display: flex; flex-direction: column; align-items: center; }
.split { width: 12px; height: 5px; background: #e6f0fb; border: 1px solid #6a8bb8; }
.tu { border: 4px solid transparent; border-bottom-color: #3c5a86; margin: 2px 0 36px; }
.vt { width: 13px; height: 146px; background: linear-gradient(90deg, #e8eef7, #c5d3e8); border: 1px solid #5b7cab; display: flex; flex-direction: column; gap: 2px; align-items: center; justify-content: center; }
.vt i { width: 8px; height: 1px; background: #7a8aa3; }
.td { border: 4px solid transparent; border-top-color: #3c5a86; margin-top: auto; }
.stabs { height: 15px; flex: none; display: flex; background: #bfd3ee; border-top: 1px solid #8aa8d0; font: 12px/14px "Noto Sans CJK SC", sans-serif; }
.navs { display: flex; justify-content: space-around; width: 58px; font: 10px/13px "DejaVu Sans", sans-serif; }
.stabs .cur { width: 44px; text-align: center; background: #fff; }
.st { width: 78px; padding-left: 8px; white-space: nowrap; background: linear-gradient(120deg, #fff 6px, #7d9dcb 7px, #d4e3f7 8px); }
.st span { font: 11px/14px "Liberation Mono", monospace; }
.hs { flex: 1; background: #7d9dcb; display: flex; align-items: center; border-left: 8px solid #dce8f8; padding: 0 3px 0 6px; gap: 5px; }
.hl { border: 4px solid transparent; border-right-color: #3c5a86; } .hr { border: 4px solid transparent; border-left-color: #3c5a86; margin-left: auto; margin-right: 16px; }
.ht { width: 98px; height: 13px; background: linear-gradient(#e8eef7, #c5d3e8); border: 1px solid #5b7cab; }
.badge { position: absolute; left: 1235px; top: -28px; width: 46px; height: 47px; border-radius: 50%; background: #f58a1f; border: 2px solid #ffe2c4; box-shadow: 0 1px 3px #555; color: #fff; font: bold 10px/12px "DejaVu Sans", sans-serif; text-align: center; padding-top: 28px; }

.task { height: 75px; flex: none; display: flex; background: #d4d0c8; border-top: 1px solid #fff; padding: 2px 2px; font: 12px/18px "Noto Sans", "Noto Sans CJK SC", sans-serif; }
.start { width: 103px; display: flex; flex-direction: column; align-items: flex-start; gap: 5px; }
.start > svg { margin-left: 65px; }
.start .tb { width: 48px; gap: 1px; padding: 0 1px; }
.tb { height: 22px; display: flex; align-items: center; gap: 4px; padding: 0 2px; background: #d4d0c8; border: 1px solid; border-color: #fff #404040 #404040 #fff; box-shadow: inset -1px -1px #808080; white-space: nowrap; overflow: hidden; }
.cap { white-space: pre; }
.tb .lat, .time span { font-size: 11px; }
.tb.on { background: #fff; border-color: #404040 #fff #fff #404040; box-shadow: inset 1px 1px #808080; font-weight: bold; }
.sep { width: 3px; margin: 2px 8px 2px 0; border: 1px solid; border-color: #fff #808080 #808080 #fff; }
.rows { flex: 1; min-width: 0; display: flex; flex-direction: column; gap: 2px; margin-right: 9px; }
.trow { display: flex; gap: 1px; }
.trow .tb { flex: 1 1 0; min-width: 0; }
.q { width: 34px; display: flex; justify-content: center; align-items: center; }
.lang { width: 20px; display: flex; flex-direction: column; align-items: center; gap: 7px; padding-top: 5px; }
.restore { width: 7px; height: 5px; border: 1px solid #000; box-shadow: 2px -2px 0 -1px #d4d0c8, 2px -2px #000; }
.tray { width: 146px; border: 1px solid; border-color: #808080 #fff #fff #808080; display: flex; align-items: center; margin-left: 1px; padding-left: 4px; gap: 3px; }
.chev { width: 10px; align-self: flex-start; font: bold 13px/10px "DejaVu Sans", sans-serif; writing-mode: vertical-rl; transform: rotate(180deg); margin-top: 4px; }
.ti { display: grid; grid-template-columns: 16px 16px; gap: 6px 8px; margin-left: 5px; }
.time { flex: 1; text-align: center; line-height: 19px; }
</style>
